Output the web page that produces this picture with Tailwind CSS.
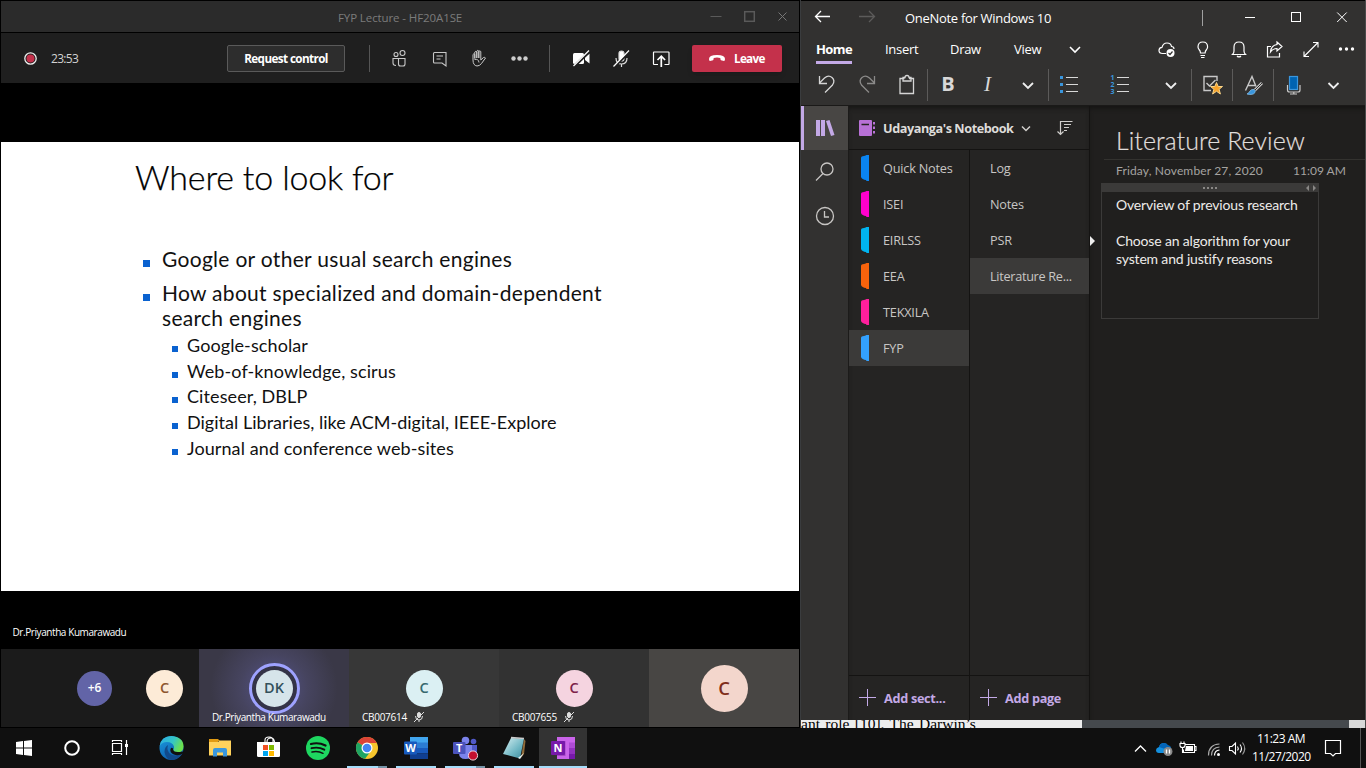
<!DOCTYPE html>
<html lang="en">
<head>
<meta charset="utf-8">
<title>Desktop</title>
<script src="https://cdn.jsdelivr.net/npm/@tailwindcss/browser@4"></script>
</head>
<body class="bg-black">
<div class="w-[1366px] h-[768px] overflow-hidden flex flex-col bg-black font-['Open_Sans',sans-serif] text-white whitespace-nowrap">
<div class="h-[728px] flex">

<!-- Teams window -->
<section class="w-[799px] h-[727px] pl-px pt-px flex flex-col shrink-0">
  <header class="h-[31px] bg-[#2b2b2b] flex items-center shrink-0">
    <div class="w-[337px]"></div>
    <div class="w-[355px] pt-0.5 text-[11.5px] tracking-[-0.1px] text-[#7b7b7b]">FYP Lecture - HF20A1SE</div>
    <svg class="w-[106px] h-[31px]" fill="none" stroke="#5a5a5a"><path d="M17.500 15.500h11"/><rect x="51.700" y="10.700" width="9.600" height="9.600" stroke-width="1.500"/><path d="M85.500 11.500l8 8m0-8l-8 8" stroke="#777"/></svg>
  </header>
  <div class="h-[50px] mt-px bg-[#1f1f1f] flex items-center shrink-0">
    <svg class="w-[50px] h-[50px]"><circle cx="29.500" cy="25.500" r="5.700" fill="#1f1f1f" stroke="#eee" stroke-width="1.300"/><circle cx="29.500" cy="25.500" r="4" fill="#c4314b"/></svg>
    <div class="w-[176px] pt-0.5 text-[12px] tracking-[-0.7px] text-[#d2d2d2]">23:53</div>
    <div class="w-[118px] h-[27px] border border-[#5a5a5a] rounded-xs bg-[#2d2d2d] flex items-center justify-center pt-0.5 text-[11.700px] font-bold tracking-[-0.6px]">Request control</div>
    <div class="w-px h-[27px] bg-[#555] ml-[24px] mr-[9px]"></div>
    <svg class="w-10 h-[50px]" fill="none" stroke="#c8c8c8" stroke-width="1.100"><circle cx="17" cy="21.500" r="2"/><circle cx="23.500" cy="20" r="2.500"/><path d="M19 25.500h-5v4.500q0 2.500 3 2.500M19.500 25.500h6.500v5.500q0 2-2 2h-2.500q-2 0-2-2z"/></svg>
    <svg class="w-10 h-[50px]" fill="none" stroke="#c8c8c8" stroke-width="1.100"><path d="M15.500 19.500h11.500v13.500l-4-3h-7.500q-1 0-1-1v-8.500q0-1 1-1zM17.500 23h6.500M17.500 26h4"/></svg>
    <svg class="w-10 h-[50px]" fill="none" stroke="#c8c8c8" stroke-width="1"><path d="M14 27v-5.500q.8-1.500 1.800 0v4-6.500q1-1.300 2 0v6-7q1-1.300 2 0v7-6.500q1-1.300 2 0v8.500l2.700-2.500q1.500-.5 2 .5l-4 5.500q-2 2.500-4.500 2.500-4-.5-4-6z"/><path d="M15.500 26.500q4-1 4.500 3"/></svg>
    <svg class="w-10 h-[50px]" fill="#ccc"><circle cx="14.500" cy="25.500" r="2.200"/><circle cx="20.500" cy="25.500" r="2.200"/><circle cx="26.500" cy="25.500" r="2.200"/></svg>
    <div class="w-px h-[27px] bg-[#555] ml-[10px] mr-[11px]"></div>
    <svg class="w-10 h-[50px]" fill="#fff"><rect x="12" y="20" width="11" height="11" rx="1.500"/><path d="M24 24l4.500-3.500v10l-4.500-3.500z"/><path d="M13 33.500L29 18" stroke="#1f1f1f" stroke-width="3"/><path d="M12.500 33L28 17.500" stroke="#fff" stroke-width="1.200"/></svg>
    <svg class="w-10 h-[50px]" fill="none" stroke="#ddd" stroke-width="1.200"><rect x="18" y="18" width="5" height="10" rx="2.500" fill="#fff"/><path d="M15 25q0 6 5.500 6t5.500-6M20.500 31v3"/><path d="M13.500 34L29 18.500" stroke="#1f1f1f" stroke-width="2"/><path d="M12.500 33.500L28 17.500" stroke="#fff"/></svg>
    <svg class="w-10 h-[50px]" fill="none" stroke="#fff" stroke-width="1.200"><path d="M17 31.500h-4q-.5 0-.5-.5v-11.500q0-.5.500-.5h14.500q.5 0 .5.500v11.500q0 .5-.5.500h-4"/><path d="M20.300 34v-10.500M16.500 27l3.800-3.800 3.800 3.800" stroke-width="1.700"/></svg>
    <div class="w-[90px] h-[27px] ml-[11px] rounded-xs bg-[#c4314b] flex items-center gap-2 pl-4 text-[11.700px] font-bold tracking-[-0.7px] shadow-md">
      <svg class="w-[18px] h-3" fill="#fff"><path d="M1 7q0-4 8-4t8 4q0 2-1 2l-3-.7q-.7-.3-.7-2.300-3.300-1-6.600 0 0 2-.7 2.300l-3 .7q-1 0-1-2z"/></svg><span class="pt-0.5">Leave</span></div>
  </div>
  <div class="h-[59px] shrink-0"></div>
  <article class="h-[449px] bg-white text-[#111] font-['Lato',sans-serif] pl-[134px] pt-[10px] shrink-0">
    <h1 class="h-[50px] leading-[50px] text-[34px] font-light tracking-[-0.18px] text-black [-webkit-text-stroke:0.25px_#000]">Where to look for</h1>
    <ul class="mt-[44px] pl-2 text-[21px] leading-[25px] tracking-[0.3px]">
      <li class="flex h-[34px]"><i class="w-[7px] h-[7px] mt-[14px] mr-[12px] bg-[#0a62d0] shrink-0"></i><span>Google or other usual search engines</span></li>
      <li class="flex h-[53px]"><i class="w-[7px] h-[7px] mt-[14px] mr-[12px] bg-[#0a62d0] shrink-0"></i><span>How about specialized and domain-dependent<br>search engines</span></li>
    </ul>
    <ul class="pl-[37px] text-[18px] leading-[25.700px] tracking-[0.1px]">
      <li class="flex h-[25.700px]"><i class="w-[6px] h-[6px] mt-[13px] mr-[9px] bg-[#0a62d0]"></i>Google-scholar</li>
      <li class="flex h-[25.700px]"><i class="w-[6px] h-[6px] mt-[13px] mr-[9px] bg-[#0a62d0]"></i>Web-of-knowledge, scirus</li>
      <li class="flex h-[25.700px]"><i class="w-[6px] h-[6px] mt-[13px] mr-[9px] bg-[#0a62d0]"></i>Citeseer, DBLP</li>
      <li class="flex h-[25.700px] tracking-[0.02px]"><i class="w-[6px] h-[6px] mt-[13px] mr-[9px] bg-[#0a62d0]"></i>Digital Libraries, like ACM-digital, IEEE-Explore</li>
      <li class="flex h-[25.700px]"><i class="w-[6px] h-[6px] mt-[13px] mr-[9px] bg-[#0a62d0]"></i>Journal and conference web-sites</li>
    </ul>
  </article>
  <div class="h-[58px] pl-[11.500px] pt-[33px] leading-4 text-[10px] font-medium tracking-[-0.42px] shrink-0">Dr.Priyantha Kumarawadu</div>
  <div class="h-[78px] flex shrink-0 text-[10px] font-semibold">
    <div class="w-[198px] bg-[#1b1b1b] flex items-center pl-[76px]">
      <div class="size-[35px] rounded-full bg-[#6264a7] flex items-center justify-center text-[12px] mr-[34px]">+6</div>
      <div class="size-[37px] rounded-full bg-[#fdebd7] text-[#8e562e] flex items-center justify-center text-[14.500px]">C</div>
    </div>
    <div class="w-[150px] relative bg-[radial-gradient(circle,#55548a_0%,#46445f_40%,#3a3847_75%)] flex items-center justify-center">
      <div class="size-[51px] rounded-full border-[3.500px] border-[#9ea2ff] bg-[#343347] flex items-center justify-center"><div class="size-[37px] rounded-full bg-[#d6e4ea] text-[#32505b] flex items-center justify-center text-[14.500px]">DK</div></div>
      <div class="absolute left-[13px] bottom-[2px] leading-4 font-medium tracking-[-0.42px]">Dr.Priyantha Kumarawadu</div>
    </div>
    <div class="w-[150px] relative bg-[#373737] flex items-center justify-center">
      <div class="size-[37px] rounded-full bg-[#dbf0f3] text-[#36696e] flex items-center justify-center text-[14.500px]">C</div>
      <div class="absolute left-[13px] bottom-[2px] leading-4 flex items-center gap-[6px] font-medium tracking-[-0.28px]">CB007614<svg class="size-3" fill="none" stroke="#ddd"><rect x="4.500" y="1.500" width="3" height="5" rx="1.500" fill="#ddd"/><path d="M2.500 5q0 4 3.500 4t3.500-4M6 9v2"/><path d="M1 11L11 1" /></svg></div>
    </div>
    <div class="w-[150px] relative bg-[#323232] flex items-center justify-center">
      <div class="size-[37px] rounded-full bg-[#f5d4e0] text-[#7d2248] flex items-center justify-center text-[14.500px]">C</div>
      <div class="absolute left-[13px] bottom-[2px] leading-4 flex items-center gap-[6px] font-medium tracking-[-0.28px]">CB007655<svg class="size-3" fill="none" stroke="#ddd"><rect x="4.500" y="1.500" width="3" height="5" rx="1.500" fill="#ddd"/><path d="M2.500 5q0 4 3.500 4t3.500-4M6 9v2"/><path d="M1 11L11 1" /></svg></div>
    </div>
    <div class="w-[150px] bg-[#484644] flex items-center justify-center">
      <div class="size-[47px] rounded-full bg-[#f3d6cc] text-[#7f2d1a] flex items-center justify-center text-[18.500px] font-semibold">C</div>
    </div>
  </div>
</section>
<div class="w-[2px] h-[728px] bg-[linear-gradient(90deg,#000_50%,#3a3c3e_50%)] shrink-0"></div>

<!-- OneNote window -->
<div class="w-[565px] h-[728px] flex flex-col border-r border-[#4b4b4b]">
<section class="w-[564px] h-[720px] border-t border-black flex flex-col shrink-0">
  <header class="h-[105px] bg-[#323130] shrink-0 border-b border-[#1a1918]">
    <div class="h-[33px] flex items-center">
      <svg class="w-[44px] h-[33px]" fill="none" stroke="#fff" stroke-width="1.300"><path d="M14.500 15.500h14.500M20 10l-5.500 5.500 5.500 5.500"/></svg>
      <svg class="w-[60px] h-[33px]" fill="none" stroke="#5c5b5a" stroke-width="1.300"><path d="M14 15.500h15M24 10l5.500 5.500-5.500 5.500"/></svg>
      <div class="w-[297px] pt-0.5 text-[13px] tracking-[-0.3px]">OneNote for Windows 10</div>
      <div class="w-px h-4 bg-[#a0a0a0]"></div>
      <svg class="w-[162px] h-[33px]" fill="none" stroke="#fff"><path d="M42 16.500h10"/><rect x="88.500" y="11.500" width="9" height="9"/><path d="M134.200 11.500l9.500 9.500m0-9.500l-9.500 9.500"/></svg>
    </div>
    <div class="h-[31px] flex items-center text-[13px] tracking-[-0.3px]">
      <div class="w-[69px] h-[31px] pl-[15px]"><div class="inline-block w-[36px] h-[30px] pt-[5px] border-b-[3px] border-[#c3a9e6] font-bold leading-5 tracking-[-0.6px]">Home</div></div>
      <div class="w-[65px] h-[31px] pt-[5px] leading-5 pl-[15px]">Insert</div>
      <div class="w-[64px] h-[31px] pt-[5px] leading-5 pl-[15px]">Draw</div>
      <div class="w-[56px] h-[31px] pt-[5px] leading-5 pl-[15px]">View</div>
      <svg class="w-[94px] h-[31px]" fill="none" stroke="#fff" stroke-width="1.600"><path d="M15 13l5 5 5-5"/></svg>
      <svg class="w-9 h-[31px]" fill="none" stroke="#fff" stroke-width="1.200"><path d="M17 19.500h-3.500q-3.500 0-3.500-3t3-3.200q1-4.300 5-4.300t4.500 3.500q2.500 0 2.500 2.500"/><circle cx="21.500" cy="19" r="4" fill="#fff" stroke="none"/><path d="M19.500 19l1.500 1.500 2.500-3" stroke="#323130"/></svg>
      <svg class="w-9 h-[31px]" fill="none" stroke="#fff" stroke-width="1.200"><path d="M15.500 19q0-2-1.500-3.500-1-1.500-1-2.500 0-5 4.800-5t4.800 5q0 1-1 2.500-1.500 1.500-1.500 3.500zM15.500 21.500h4.500M16 23.500h3.500"/></svg>
      <svg class="w-9 h-[31px]" fill="none" stroke="#fff" stroke-width="1.200"><path d="M11.500 20.500h13q-1.500-1.500-1.500-3.500v-4q0-5-5-5t-5 5v4q0 2-1.500 3.500zM16 22q2 2 4 0"/></svg>
      <svg class="w-9 h-[31px]" fill="none" stroke="#fff" stroke-width="1.200"><path d="M14 12.500h-3.500v10.500h12v-4M20 8l5 4.500-5 4.500v-2.500q-4 0-6.500 3.500.5-6.500 6.500-7.500z"/></svg>
      <svg class="w-9 h-[31px]" fill="none" stroke="#fff" stroke-width="1.100"><path d="M11 22.500L25 8.500M20 8.500h5v5M11 17.500v5h5"/></svg>
      <svg class="w-9 h-[31px]" fill="#fff"><circle cx="11.500" cy="15" r="1.700"/><circle cx="17.500" cy="15" r="1.700"/><circle cx="23.500" cy="15" r="1.700"/></svg>
    </div>
    <div class="h-[40px] flex items-center pl-[5px]">
      <svg class="w-10 h-10" fill="none" stroke="#d5d5d5" stroke-width="1.300"><path d="M13.500 11v7.500h7.500M13.500 18l5-5q4-3.500 7.500-.5t.5 7.500l-7.500 7.500"/></svg>
      <svg class="w-10 h-10" fill="none" stroke="#8b8a89" stroke-width="1.300"><path d="M28.500 11v7.500h-7.500M28.500 18l-5-5q-4-3.500-7.500-.5t-.5 7.500l7.500 7.500"/></svg>
      <svg class="w-10 h-10" fill="none" stroke="#d5d5d5" stroke-width="1.300"><path d="M18.500 13.500h-4.500v15h13.500v-15h-4.500"/><path d="M17 16v-3.500h2q0-2 2-2t2 2h2v3.500z"/></svg>
      <div class="w-px h-8 bg-[#5c5b5a] mx-px"></div>
      <div class="w-10 h-10 text-center text-[20px] leading-[38px] pr-0.5 font-bold text-[#d8d8d8]">B</div>
      <div class="w-10 h-10 text-center text-[21px] leading-[39px] pr-[3px] italic text-[#d8d8d8] font-['Liberation_Serif',serif]">I</div>
      <svg class="w-[39px] h-10" fill="none" stroke="#eee" stroke-width="1.800"><path d="M14 18l5 5 5-5"/></svg>
      <div class="w-px h-8 bg-[#5c5b5a]"></div>
      <svg class="w-[52px] h-10"><path d="M11 11h3v3h-3zM11 18h3v3h-3zM11 25h3v3h-3z" fill="#3a96dd"/><path d="M17 12.500h12M17 19.500h12M17 26.500h12" stroke="#d8d8d8" stroke-width="1.200"/></svg>
      <svg class="w-[51px] h-10"><path d="M16 12.500h12M16 19.500h12M16 26.500h12" stroke="#d8d8d8" stroke-width="1.200"/><g fill="#3a96dd" font-size="7" font-weight="bold" font-family="Open Sans"><text x="9.500" y="14.500">1</text><text x="9.500" y="21.500">2</text><text x="9.500" y="28.500">3</text></g></svg>
      <svg class="w-[39px] h-10" fill="none" stroke="#eee" stroke-width="1.800"><path d="M14 18l5 5 5-5"/></svg>
      <div class="w-px h-8 bg-[#5c5b5a]"></div>
      <svg class="w-10 h-10" fill="none" stroke="#c8c8c8" stroke-width="1.400"><path d="M25 16v-4.500h-13v14h7M14.500 18l3 3 6-6"/><path d="M24.500 17.500l1.700 4h4.300l-3.400 2.800 1.300 4.700-3.900-2.700-3.900 2.700 1.300-4.700-3.400-2.800h4.300z" fill="#f7a32b" stroke="#f9d58a" stroke-width="1"/></svg>
      <div class="w-px h-8 bg-[#5c5b5a]"></div>
      <svg class="w-10 h-10" fill="none" stroke="#c8c8c8" stroke-width="1.400"><path d="M12.500 25.500L19 11.500l4 10M15 20.500h7"/><path d="M29 18l-7 7" stroke-width="2.800"/><path d="M29 18l-7 7" stroke="#323130" stroke-width="1"/><path d="M14 29q2-1 3-3t4-1.500q2 1 1 3-2 3-8 1.500z" fill="#3a96dd" stroke="#8cc5f0" stroke-width=".7"/></svg>
      <div class="w-px h-8 bg-[#5c5b5a]"></div>
      <svg class="w-10 h-10" fill="none" stroke="#c8c8c8" stroke-width="1.200"><rect x="15.500" y="11.500" width="8" height="13" fill="#0063b1" stroke="#3a96dd"/><path d="M13.500 20v5q0 2 2 2h8.500q2 0 2-2v-5M19.800 27v2M16 29h7"/></svg>
      <svg class="w-10 h-10" fill="none" stroke="#eee" stroke-width="1.800"><path d="M14.500 18l5 5 5-5"/></svg>
    </div>
  </header>
  <div class="h-[614px] flex">
    <nav class="w-[47px] bg-[#323130] shrink-0">
      <div class="h-[44px] bg-[#484644] border-l-[3px] border-[#c3a9e6]"><svg class="w-11 h-11" fill="#c3a9e6"><path d="M12 14h4v16h-4zM17 14h4v16h-4zM22 15l3.500-1 5 15-3.500 1z"/></svg></div>
      <svg class="w-[47px] h-[44px]" fill="none" stroke="#c8c6c4" stroke-width="1.300"><circle cx="26" cy="19" r="6"/><path d="M22 23.500l-7 7"/></svg>
      <svg class="w-[47px] h-[44px]" fill="none" stroke="#c8c6c4" stroke-width="1.300"><circle cx="24" cy="22" r="8.500"/><path d="M23.500 17v6h4.500"/></svg>
    </nav>
    <div class="w-px bg-[#1c1b1a]"></div>
    <div class="w-[240px] bg-[#252423] flex flex-col shrink-0 text-[#c8c6c4] text-[12.700px] tracking-[-0.2px] shadow-[inset_0_4px_5px_-2px_#161514]">
      <div class="h-[44px] border-b border-[#141312] flex items-center shrink-0">
        <svg class="w-[34px] h-11"><rect x="10" y="14" width="13" height="16" rx="1" fill="#b871d6"/><path d="M12.500 18.500h7.500" stroke="#252423" stroke-width="1.500"/><path d="M24 16h2v2.500h-2zM24 20.500h2v2.500h-2zM24 25h2v2.500h-2z" fill="#b871d6"/></svg>
        <div class="w-[134px] pt-0.5 font-bold tracking-[-0.45px] text-[#dedcda] text-[12.700px]">Udayanga's Notebook</div>
        <svg class="w-[38px] h-11" fill="none" stroke="#d0cecc" stroke-width="1.500"><path d="M5 20.500l4 4 4-4"/></svg>
        <svg class="w-8 h-11" fill="none" stroke="#d0cecc" stroke-width="1.200"><path d="M6 15.500h11.500M9 18.500h7M9 21.500h5M9 24.500h3M5.500 15v13M2.500 25.500l3 3 3-3"/></svg>
      </div>
      <div class="flex h-[526px] border-b border-[#141312]">
        <div class="w-[121px] border-r border-[#141312] shrink-0">
          <div class="h-9 flex items-center"><svg class="w-[34px] h-9"><path d="M12 8q0-2 3-2 2-.5 2.500-1h2.500v26h-2.500l-.5-1q-4-.5-5-3z" fill="#0a84f0"/></svg><span class="pt-0.5">Quick Notes</span></div>
          <div class="h-9 flex items-center"><svg class="w-[34px] h-9"><path d="M12 8q0-2 3-2 2-.5 2.500-1h2.500v26h-2.500l-.5-1q-4-.5-5-3z" fill="#ff00cc"/></svg><span class="pt-0.5">ISEI</span></div>
          <div class="h-9 flex items-center"><svg class="w-[34px] h-9"><path d="M12 8q0-2 3-2 2-.5 2.500-1h2.500v26h-2.500l-.5-1q-4-.5-5-3z" fill="#00b4f0"/></svg><span class="pt-0.5">EIRLSS</span></div>
          <div class="h-9 flex items-center"><svg class="w-[34px] h-9"><path d="M12 8q0-2 3-2 2-.5 2.500-1h2.500v26h-2.500l-.5-1q-4-.5-5-3z" fill="#f7630c"/></svg><span class="pt-0.5">EEA</span></div>
          <div class="h-9 flex items-center"><svg class="w-[34px] h-9"><path d="M12 8q0-2 3-2 2-.5 2.500-1h2.500v26h-2.500l-.5-1q-4-.5-5-3z" fill="#ff1f9c"/></svg><span class="pt-0.5">TEKXILA</span></div>
          <div class="h-9 flex items-center bg-[#3b3a39]"><svg class="w-[34px] h-9"><path d="M12 8q0-2 3-2 2-.5 2.500-1h2.500v26h-2.500l-.5-1q-4-.5-5-3z" fill="#33a1ff"/></svg><span class="pt-0.5">FYP</span></div>
        </div>
        <div class="w-[119px]">
          <div class="h-9 flex items-center pl-5 pt-0.5">Log</div>
          <div class="h-9 flex items-center pl-5 pt-0.5">Notes</div>
          <div class="h-9 flex items-center pl-5 pt-0.5">PSR</div>
          <div class="h-9 flex items-center pl-5 pt-0.5 bg-[#3b3a39] tracking-[-0.3px]">Literature Re...</div>
        </div>
      </div>
      <div class="flex flex-1 text-[#c3a9e6] font-bold tracking-[-0.3px] items-stretch">
        <div class="w-[121px] border-r border-[#141312] flex items-center"><svg class="w-[35px] h-10" stroke="#c3a9e6"><path d="M10 19.500h17M18.500 11v17"/></svg><span class="pt-px">Add sect...</span></div>
        <div class="w-[119px] flex items-center"><svg class="w-[35px] h-10" stroke="#c3a9e6"><path d="M10 19.500h17M18.500 11v17"/></svg><span class="pt-px">Add page</span></div>
      </div>
    </div>
    <div class="w-px bg-[#141312]"></div>
    <main class="w-[275px] bg-[#201f1e] flex font-['Lato',sans-serif] shadow-[inset_0_4px_5px_-2px_#141312]">
      <div class="w-[11px] pt-[129px] shrink-0"><svg class="w-[11px] h-3"><path d="M0 1l5 5-5 5z" fill="#eee"/></svg></div>
      <div class="w-[264px] shrink-0">
        <h2 class="h-[54px] pt-[17px] ml-[3px] pl-3 border-b border-[#33322f] leading-[34px] text-[25px] font-light text-[#e1dfdd] tracking-[0.05px] [-webkit-text-stroke:0.2px_#e1dfdd]">Literature Review</h2>
        <div class="h-[23px] pb-px flex items-center pl-[15px] text-[12px] text-[#a5a3a1]"><span class="w-[177px] tracking-[0.15px]">Friday, November 27, 2020</span><span class="tracking-[0px]">11:09 AM</span></div>
        <div class="w-[218px] h-[136px] border border-[#3b3a39]">
          <div class="h-[8px] bg-[#3b3a39]"><svg class="w-[216px] h-2"><path d="M101 3h2v2h-2zM105 3h2v2h-2zM109 3h2v2h-2zM113 3h2v2h-2zM207 1v6l-3-3zM211 1v6l3-3z" fill="#8a8886"/></svg></div>
          <p class="pl-[14px] pt-[4px] text-[14px] leading-[18px] tracking-[-0.17px] text-[#edebe9]">Overview of previous research<br><br>Choose an algorithm for your<br>system and justify reasons</p>
        </div>
      </div>
    </main>
  </div>
</section>
<!-- window underneath -->
<div class="h-2 flex overflow-hidden">
  <div class="w-[281px] bg-[#ededed] font-['Liberation_Serif',serif] text-black text-[15.500px] leading-[16px] h-2 overflow-hidden tracking-[0px] [word-spacing:1.500px]"><div class="-mt-[4px]">ant role [10]. The Darwin’s</div></div>
  <div class="w-[267px] bg-[#45494d]"></div>
  <div class="flex-1 bg-[#d8d8d8]"></div>
</div>
</div>
</div>

<!-- Taskbar -->
<footer class="h-10 bg-[#101010] flex">
  <svg class="w-12 h-10" fill="#fff"><path d="M16 14l7-1v6.500h-7zM24 13l8-1v7.500h-8zM16 20.500h7v6.500l-7-1zM24 20.500h8v7.500l-8-1z"/></svg>
  <svg class="w-12 h-10" fill="none" stroke="#fff" stroke-width="2"><circle cx="24" cy="20" r="6.800"/></svg>
  <svg class="w-12 h-10" fill="none" stroke="#fff" stroke-width="1.200"><path d="M16.500 15.500h9v8h-9zM16.500 14v-2M25.500 14v-2M16.500 12.500h9M16.500 27v-1.500h9v1.500M30.500 12v15"/><path d="M29 16h3v3h-3z" fill="#fff" stroke="none"/></svg>
  <div class="w-[3px]"></div>
  <svg class="w-[49px] h-10" viewBox="0 0 49 40"><defs><linearGradient id="e1" x1="0" y1="0" x2="1" y2=".4"><stop offset="0" stop-color="#2aa9e8"/><stop offset=".6" stop-color="#35c6c4"/><stop offset="1" stop-color="#6be04e"/></linearGradient><linearGradient id="e2" x1="0" y1="0" x2=".6" y2="1"><stop offset="0" stop-color="#1b9de2"/><stop offset="1" stop-color="#0d59a8"/></linearGradient></defs><circle cx="24.500" cy="20" r="12" fill="url(#e2)"/><path d="M12.700 18Q14 8 24.500 8q12 1 12 10.500 0 6-6 6-4.500 0-4.500-2.500 1.500-1.500 1-3.500-1.500-4.500-7-4.500-5 0-7.300 4z" fill="url(#e1)"/><path d="M21 17q-2 6 3 9.500 5 2.500 11-1-4 6.500-10.500 6.500-6-1-7-8 0-5 3.500-7z" fill="#114a8b"/><path d="M26 20.500q0 5 9.500 3l1 1.500q-5 3.500-9.500 1.500-4.500-2-3.500-5.500 1-2 2.500-.5z" fill="#101010"/></svg>
  <svg class="w-[49px] h-10"><path d="M13 11h9l2 2h-2v4h-9z" fill="#e19b13"/><path d="M13 14h9l1.500-1.500h11.500v15h-22z" fill="#ffd25c"/><path d="M17 28.500v-6.500q0-2 2-2h10q2 0 2 2v6.500h-4v-4h-6v4z" fill="#3a97dd"/></svg>
  <svg class="w-[49px] h-10"><path d="M20 14v-2q0-3 4-3t4 3v2M22 14q0-4 4-4 3 0 3.500 4" fill="none" stroke="#fff" stroke-width="1.100"/><path d="M12 14h23v13.500q0 1.500-1.500 1.500h-20q-1.500 0-1.500-1.500z" fill="#fff"/><path d="M18 17h5v5h-5z" fill="#f25022"/><path d="M24 17h5v5h-5z" fill="#7fba00"/><path d="M18 23h5v5h-5z" fill="#00a4ef"/><path d="M24 23h5v5h-5z" fill="#ffb900"/></svg>
  <svg class="w-[49px] h-10" fill="none" stroke="#101010" stroke-linecap="round"><circle cx="24" cy="20" r="12" fill="#1ed760" stroke="none"/><path d="M17 16q7.500-2 14.500 1.500" stroke-width="2.200"/><path d="M17.500 20.200q7-1.700 12.800 1.500" stroke-width="1.900"/><path d="M18 24q6-1.400 11 1.300" stroke-width="1.500"/></svg>
  <div class="w-[49px] relative"><svg class="w-[49px] h-10"><circle cx="24" cy="20" r="11" fill="#f7c52d"/><path d="M24 20L14.500 14.300A11 11 0 0 1 33.700 15H24z" fill="#dc4437"/><path d="M24 20L14.500 14.300A11 11 0 0 0 22 30.800L28.300 22.500z" fill="#1fa463"/><circle cx="24" cy="20" r="5.500" fill="#fff"/><circle cx="24" cy="20" r="4.300" fill="#4285f4"/></svg><div class="absolute left-[4px] bottom-0 h-0.5 w-10 bg-[linear-gradient(90deg,#a5dcfa_77%,#7594a8_77%)]"></div></div>
  <div class="w-[49px] relative"><svg class="w-[49px] h-10"><path d="M18 9h18v6H18z" fill="#41a5ee"/><path d="M18 14.500h18V20H18z" fill="#2b7cd3"/><path d="M18 20h18v5.500H18z" fill="#185abd"/><path d="M18 25.500h18V31H18z" fill="#103f91"/><rect x="12" y="13.500" width="13" height="13" rx="1" fill="#185abd"/><text x="18.500" y="24" text-anchor="middle" fill="#fff" font-family="Open Sans" font-weight="bold" font-size="11">W</text></svg><div class="absolute left-[4px] bottom-0 h-0.5 w-10 bg-[#a5dcfa]"></div></div>
  <div class="w-[49px] relative"><svg class="w-[49px] h-10"><circle cx="24.500" cy="12.500" r="3.800" fill="#7b83eb"/><circle cx="32.500" cy="13.500" r="2.800" fill="#5059c9"/><path d="M28 17h8v8q0 4-5 4z" fill="#5059c9"/><path d="M18 17h13v8q0 6-6.500 6t-6.500-6z" fill="#7b83eb"/><rect x="12" y="14" width="12.500" height="12" rx="1" fill="#4b53bc"/><text x="18.200" y="24" text-anchor="middle" fill="#fff" font-family="Open Sans" font-weight="bold" font-size="11">T</text><circle cx="32" cy="27.500" r="4.600" fill="#c50f2e" stroke="#f3d5d9" stroke-width="1"/></svg><div class="absolute left-[4px] bottom-0 h-0.5 w-10 bg-[linear-gradient(90deg,#a5dcfa_77%,#7594a8_77%)]"></div></div>
  <div class="w-[49px] relative"><svg class="w-[49px] h-10"><defs><linearGradient id="n" x1="0" y1="0" x2="1" y2="1"><stop offset="0" stop-color="#d8f0f2"/><stop offset=".6" stop-color="#6fb7c4"/><stop offset="1" stop-color="#3c8a9c"/></linearGradient></defs><path d="M34 11l1.500 2-1.500 13-3 4z" fill="#8f6b3a"/><path d="M21 10l13 .5-4 20-17-4.500z" fill="url(#n)"/><path d="M28 30l6-5-4 6z" fill="#e8f4f6"/><path d="M21 9.500l13 1" stroke="#ccc" stroke-width="1.500"/></svg><div class="absolute left-[4px] bottom-0 h-0.5 w-10 bg-[#a5dcfa]"></div></div>
  <div class="w-12 relative bg-[#333]"><svg class="w-12 h-10"><path d="M18 9h18v22H18z" fill="#ca64ea"/><path d="M30 9h6v5.500h-6z" fill="#ca64ea"/><path d="M30 14.500h6V20h-6z" fill="#ae4bd5"/><path d="M30 20h6v5.500h-6z" fill="#9332bf"/><path d="M30 25.500h6V31h-6z" fill="#7719aa"/><path d="M18 13h8.500v15H18z" fill="#a548c5"/><rect x="12" y="13" width="14" height="14" rx="1" fill="#7719aa"/><text x="19" y="24" text-anchor="middle" fill="#fff" font-family="Open Sans" font-weight="bold" font-size="11">N</text></svg><div class="absolute inset-x-0 bottom-0 h-0.5 bg-[#a5dcfa]"></div></div>
  <div class="flex-1"></div>
  <div class="flex items-center text-[12px] tracking-[-0.5px] text-center leading-[18px]">
    <svg class="w-[22px] h-10" fill="none" stroke="#fff" stroke-width="1.300"><path d="M6 23.500l5.500-5.500 5.500 5.500"/></svg>
    <svg class="w-[26px] h-10"><path d="M8 25q-3 0-3-3 0-2 3-3 1-4 5-4 3 0 4 2.500 3 0 3 4v3.500z" fill="#1490df"/><path d="M8 19q1-4 5-4 3 0 4 2.500 3 0 3 3.500l-6 0z" fill="#0364b8"/><circle cx="17" cy="23.500" r="4.500" fill="#8a8a8a"/><path d="M15.500 21.500v4M18.500 21.500v4" stroke="#fff" stroke-width="1.300"/></svg>
    <svg class="w-[25px] h-10" fill="none" stroke="#fff" stroke-width="1.100"><path d="M8.500 16.500h9v8h-11v-3M17.500 18.500h1.500v4h-1.500M3 15.500h5v2q0 2-2.500 2t-2.500-2zM4 15.500v-2M7 15.500v-2M5.500 19.500v5h2"/><path d="M9 18h7v5h-8z" fill="#fff" stroke="none"/></svg>
    <svg class="w-[24px] h-10" fill="none" stroke="#fff" stroke-width="1.200"><g stroke="#aaa"><path d="M6.500 27.500q0-11 11-11.500M9.500 27.500q0-8 8-8.500"/></g><path d="M12.500 27.500q0-5 5-5.500"/><circle cx="16.500" cy="26.500" r="1.500" fill="#fff" stroke="none"/></svg>
    <svg class="w-[24px] h-10" fill="none" stroke="#fff" stroke-width="1.100"><path d="M3.500 18.500h2.500l3.500-3.500v11l-3.500-3.500H3.500zM11.500 18.500q1.500 2 0 4M14 16.500q3 4 0 8"/><path d="M16.500 14.500q4.500 6 0 12" stroke="#999"/></svg>
    <div class="w-[60px] pl-0.5">11:23 AM<br>11/27/2020</div>
    <svg class="w-[50px] h-10" fill="none" stroke="#fff" stroke-width="1.200"><path d="M15.500 12.500h15v13h-5l-2.500 2.500-2.500-2.500h-5z"/></svg>
    <div class="w-px h-10 bg-[#555] mr-[5px]"></div>
  </div>
</footer>
</div>
</body>
</html>
